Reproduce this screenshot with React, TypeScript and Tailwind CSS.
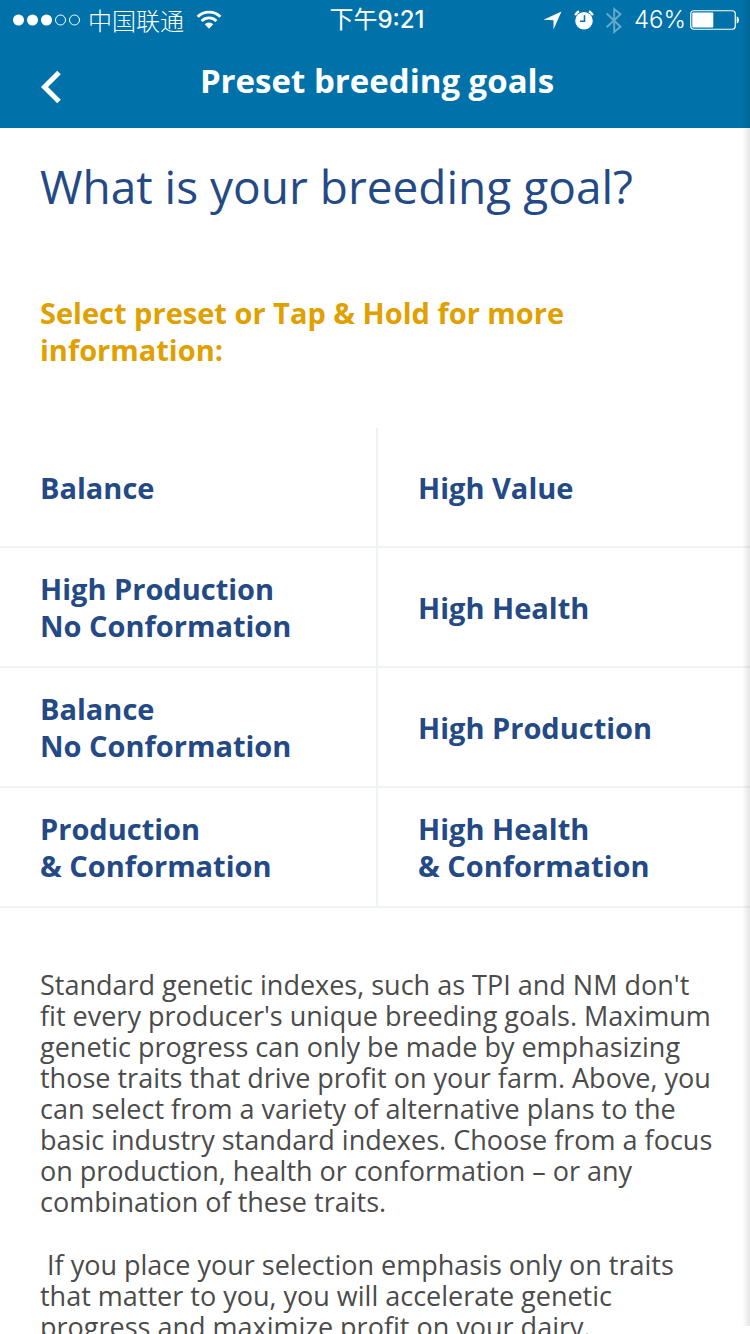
import React from "react";

const presets: string[][] = [
  ["Balance"],
  ["High Value"],
  ["High Production", "No Conformation"],
  ["High Health"],
  ["Balance", "No Conformation"],
  ["High Production"],
  ["Production", "& Conformation"],
  ["High Health", "& Conformation"],
];

const intro = [
  "Standard genetic indexes, such as TPI and NM don't",
  "fit every producer's unique breeding goals. Maximum",
  "genetic progress can only be made by emphasizing",
  "those traits that drive profit on your farm. Above, you",
  "can select from a variety of alternative plans to the",
  "basic industry standard indexes. Choose from a focus",
  "on production, health or conformation – or any",
  "combination of these traits.",
];

const emphasis = [
  " If you place your selection emphasis only on traits",
  "that matter to you, you will accelerate genetic",
  "progress and maximize profit on your dairy.",
];

function Lines({ lines }: { lines: string[] }) {
  return (
    <>
      {lines.map((line) => (
        <span key={line} className="block whitespace-pre">
          {line}
        </span>
      ))}
    </>
  );
}

function StatusBar() {
  return (
    <div className="grid h-10 grid-cols-[1fr_auto_1fr] items-center px-3 font-['Inter','Noto_Sans_CJK_SC',sans-serif] text-2xl leading-10">
      <div className="flex items-center gap-1.5">
        <svg width="70" height="14" viewBox="0 0 70 14" fill="#fff" aria-hidden="true">
          <circle cx="6.5" cy="7" r="5.5" />
          <circle cx="20.5" cy="7" r="5.5" />
          <circle cx="34.5" cy="7" r="5.5" />
          <circle cx="48.5" cy="7" r="5" fill="none" stroke="#fff" />
          <circle cx="62.5" cy="7" r="5" fill="none" stroke="#fff" />
        </svg>
        <span className="font-['Noto_Sans_CJK_SC',sans-serif] font-light">中国联通</span>
        <svg className="ml-1.5" width="26" height="20" viewBox="0 0 26 20" aria-hidden="true">
          <path d="M1.6 6.8a16.2 16.2 0 0 1 22.8 0" fill="none" stroke="#fff" strokeWidth="2.8" />
          <path d="M5.6 11a10.5 10.5 0 0 1 14.8 0" fill="none" stroke="#fff" strokeWidth="2.7" />
          <path d="M8.7 14.3a6.1 6.1 0 0 1 8.6 0L13 18.8z" fill="#fff" />
        </svg>
      </div>
      <div className="pl-1 font-medium">
        <span className="font-normal">下午</span>9:21
      </div>
      <div className="flex items-center justify-end">
        <svg width="19" height="19" viewBox="0 0 19 19" fill="#fff" aria-hidden="true">
          <path d="M18.5.5 10.5 18.5V9.3L.5 8.8z" />
        </svg>
        <svg className="ml-3" width="20" height="20" viewBox="0 0 20 20" aria-hidden="true">
          <circle cx="10" cy="10.8" r="8.8" fill="#fff" />
          <path d="M1.1 5.2A10 10 0 0 1 5 1.3M15 1.3a10 10 0 0 1 3.9 3.9" fill="none" stroke="#fff" strokeWidth="2.2" />
          <path d="M10.5 5.3v6H6" fill="none" stroke="#0071a9" strokeWidth="1.5" />
        </svg>
        <svg className="ml-3" width="16" height="27" viewBox="0 0 16 27" fill="none" stroke="#66aacb" strokeWidth="1.9" aria-hidden="true">
          <path d="M.7 6.5 14.5 19.7 8.2 25V2l6.3 5.2L.7 20.3" />
        </svg>
        <span className="ml-3 font-light">46%</span>
        <svg className="-mr-0.5 ml-1" width="50" height="20" viewBox="0 0 50 20" aria-hidden="true">
          <rect x=".75" y=".75" width="44.5" height="18.5" rx="3" fill="none" stroke="#fff" strokeWidth="1.2" />
          <rect x="2.3" y="2.5" width="21" height="15" rx="1" fill="#fff" />
          <path d="M46.7 6.5c3 .3 3 6.700 0 7z" fill="#fff" />
        </svg>
      </div>
    </div>
  );
}

export default function App() {
  return (
    <div className="relative flex h-screen flex-col overflow-hidden bg-white font-['Open_Sans',sans-serif] text-[#244a86]">
      <header className="shrink-0 bg-[#0071a9] text-white">
        <StatusBar />
        <div className="grid h-22 grid-cols-[80px_1fr_76px] items-center pb-1.5">
          <button type="button" aria-label="Back" className="mt-3 flex justify-center pl-[22px]">
            <svg width="22" height="34" viewBox="0 0 22 34" fill="none" stroke="#fff" strokeWidth="5" aria-hidden="true">
              <path d="M19 2.500 4.500 17 19 31.500" />
            </svg>
          </button>
          <h1 className="text-center text-[33px] leading-10 font-bold">Preset breeding goals</h1>
        </div>
      </header>

      <main className="min-h-0 flex-1 overflow-hidden">
        <div className="px-10">
          <h2 className="pt-[26px] text-[46px] leading-16">What is your breeding goal?</h2>
          <p className="pt-[76px] text-[29px] leading-[37px] font-bold text-[#dfa000]">
            Select preset or Tap &amp; Hold for more
            <br />
            information:
          </p>
        </div>

        <div className="mt-[60px] grid grid-cols-[378fr_372fr]">
          {presets.map((lines) => (
            <button
              key={lines.join(" ")}
              type="button"
              className="flex h-30 flex-col justify-center border-b-2 border-[#eff2f7] px-10 text-left text-[29px] leading-[37px] font-bold odd:border-r-2"
            >
              <Lines lines={lines} />
            </button>
          ))}
        </div>

        <div className="flex flex-col gap-8 px-10 pt-[61px] text-[27px] leading-[31px] text-[#4b4b4b]">
          <p>
            <Lines lines={intro} />
          </p>
          <p>
            <Lines lines={emphasis} />
          </p>
        </div>
      </main>

      <div className="pointer-events-none absolute top-0 right-0 bottom-2 w-2 bg-linear-to-l from-black/10 to-transparent" />
    </div>
  );
}
